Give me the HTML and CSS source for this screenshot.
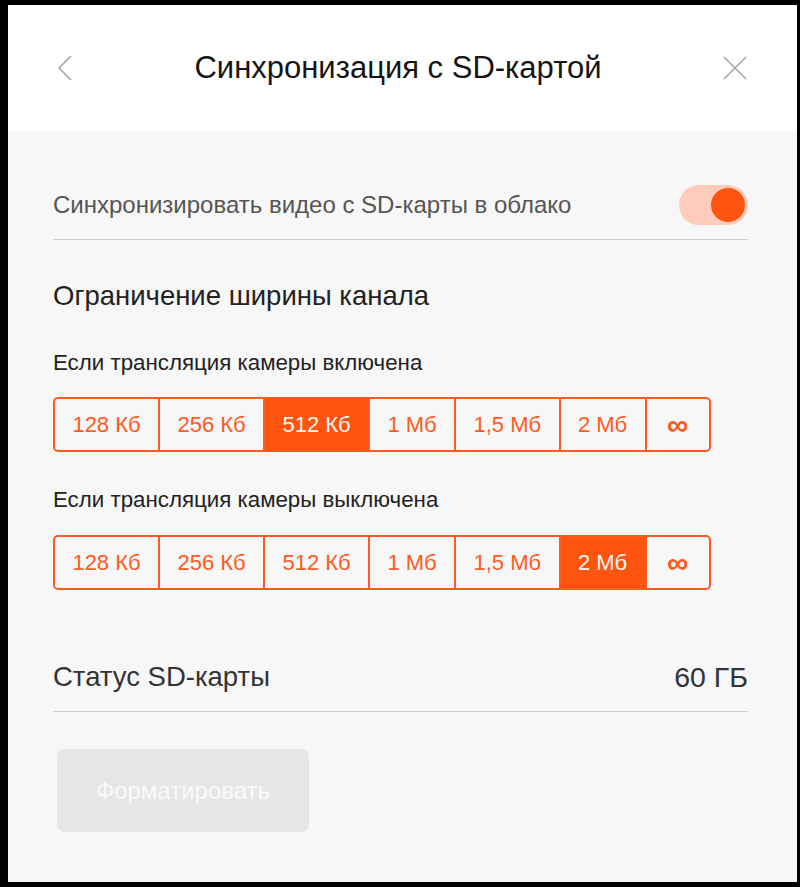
FILE: index.html
```html
<!DOCTYPE html>
<html lang="ru">

<head>
    <meta charset="UTF-8">
    <meta name="viewport" content="width=device-width, initial-scale=1.0">
    <title>Синхронизация с SD-картой</title>
    <link rel="stylesheet" href="styles.css">
</head>

<body>
    <section class="modal">
        <header class="modal-header">
            <button class="icon-btn" aria-label="Назад">
                <svg width="18" height="28" viewBox="0 0 18 28">
                    <path d="M15 2 L3 14 L15 26" fill="none" stroke="#a6a6a6" stroke-width="1.6"/>
                </svg>
            </button>
            <h1 class="modal-title">Синхронизация с SD-картой</h1>
            <button class="icon-btn" aria-label="Закрыть">
                <svg width="26" height="26" viewBox="0 0 26 26">
                    <path d="M2 2 L24 24 M24 2 L2 24" fill="none" stroke="#a6a6a6" stroke-width="1.6"/>
                </svg>
            </button>
        </header>

        <main class="modal-body">
            <div class="row row-toggle">
                <span class="row-label">Синхронизировать видео с SD-карты в облако</span>
                <span class="toggle is-on"><span class="knob"></span></span>
            </div>

            <h2 class="section-title">Ограничение ширины канала</h2>

            <p class="group-label">Если трансляция камеры включена</p>
            <div class="segments">
                <span class="seg">128 Кб</span>
                <span class="seg">256 Кб</span>
                <span class="seg active">512 Кб</span>
                <span class="seg">1 Мб</span>
                <span class="seg">1,5 Мб</span>
                <span class="seg">2 Мб</span>
                <span class="seg inf">∞</span>
            </div>

            <p class="group-label">Если трансляция камеры выключена</p>
            <div class="segments">
                <span class="seg">128 Кб</span>
                <span class="seg">256 Кб</span>
                <span class="seg">512 Кб</span>
                <span class="seg">1 Мб</span>
                <span class="seg">1,5 Мб</span>
                <span class="seg active">2 Мб</span>
                <span class="seg inf">∞</span>
            </div>

            <div class="row row-status">
                <span class="row-label dark">Статус SD-карты</span>
                <span class="row-value">60 ГБ</span>
            </div>

            <button class="btn-format" disabled>Форматировать</button>
        </main>
    </section>
</body>

</html>
```

FILE: styles.css
```css
html {
    box-sizing: border-box;
    font-family: "Liberation Sans", Arial, sans-serif;
    font-size: 16px;
}

*,
*:before,
*:after {
    box-sizing: inherit;
}

body {
    margin: 0;
    padding: 5px 3px 5px 8px;
    background: #000;
    height: 887px;
}

.modal {
    height: 877px;
    background: #f7f7f7;
    display: flex;
    flex-direction: column;
}

.modal-header {
    height: 126px;
    background: #fff;
    display: flex;
    align-items: center;
    justify-content: space-between;
    padding: 0 49px 0 48px;
}

.icon-btn {
    border: 0;
    background: none;
    padding: 0;
    display: flex;
}

.modal-title {
    margin: 0;
    font-size: 31px;
    line-height: 36px;
    font-weight: normal;
    color: #151515;
}

.modal-body {
    flex-grow: 1;
    padding: 0 49px 0 45px;
}

.row {
    display: flex;
    justify-content: space-between;
    align-items: center;
    border-bottom: 1px solid #cfcfcf;
}

.row-toggle {
    padding: 54px 0 14px;
}

.row-label {
    font-size: 24px;
    line-height: 28px;
    color: #555;
}

.row-label.dark {
    font-size: 27.5px;
    line-height: 32px;
    color: #333;
}

.toggle {
    width: 69px;
    height: 40px;
    border-radius: 20px;
    background: #ffcbbb;
    position: relative;
}

.toggle .knob {
    position: absolute;
    top: 3px;
    right: 3px;
    width: 34px;
    height: 34px;
    border-radius: 50%;
    background: #ff5310;
}

.section-title {
    margin: 40px 0 0;
    font-size: 27.5px;
    line-height: 32px;
    font-weight: normal;
    color: #222;
}

.group-label {
    margin: 38px 0 0;
    font-size: 22.3px;
    line-height: 26px;
    color: #222;
}

.segments + .group-label {
    margin-top: 35px;
}

.segments {
    display: inline-flex;
    margin-top: 21px;
    border: 2px solid #ff5a20;
    border-radius: 5px;
    overflow: hidden;
}

.segments + .group-label + .segments {
    margin-top: 22px;
}

.seg {
    height: 51px;
    display: flex;
    align-items: center;
    padding: 0 17.4px;
    font-size: 22px;
    color: #ff5a20;
    border-left: 2px solid #ff5a20;
}

.seg:first-child {
    border-left: 0;
}

.seg.active {
    background: #ff5310;
    color: #fff6f2;
}

.seg.inf {
    font-size: 30px;
    font-weight: bold;
    padding: 0 20.5px;
}

.row-status {
    margin-top: 71px;
    padding-bottom: 18px;
}

.row-value {
    font-size: 28.5px;
    line-height: 32px;
    color: #333;
}

.btn-format {
    display: block;
    margin: 37px 0 0 4px;
    width: 252px;
    height: 83px;
    border: 0;
    border-radius: 7px;
    background: #e6e6e6;
    color: #fafafa;
    font-family: inherit;
    font-size: 24px;
}
```
